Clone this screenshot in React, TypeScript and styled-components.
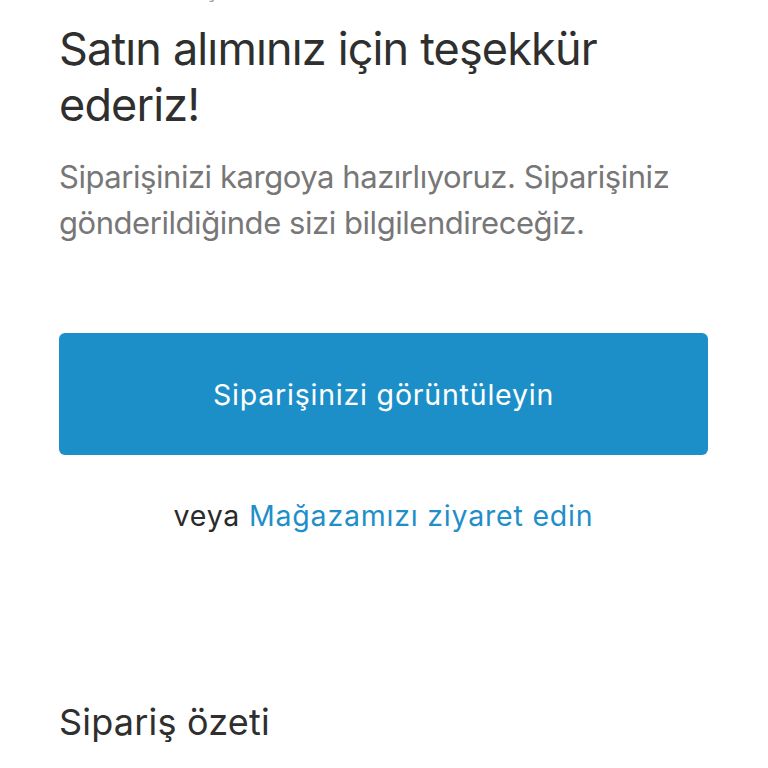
import React from "react";
import styled, { createGlobalStyle } from "styled-components";

const Global = createGlobalStyle`
  html, body { margin: 0; padding: 0; background: #ffffff; }
  body { font-family: Inter, "Noto Sans", "Liberation Sans", sans-serif; overflow: hidden; }
`;

const Page = styled.main`
  width: 768px;
  height: 768px;
  box-sizing: border-box;
  padding: 0 60px 0 59px;
  display: flex;
  flex-direction: column;
  overflow: hidden;
`;

const Greeting = styled.div`
  font-size: 24px;
  line-height: 30px;
  color: #a0a0a0;
  margin-top: -26px;
  white-space: nowrap;
`;

const Title = styled.h1`
  margin: 17px 0 0;
  font-size: 45px;
  line-height: 56px;
  font-weight: 400;
  color: #2f2f2f;
  letter-spacing: -0.85px;
`;

const Lead = styled.p`
  margin: 21px 0 0;
  font-size: 31px;
  line-height: 46px;
  color: #777777;
  letter-spacing: -0.45px;
`;

const PrimaryButton = styled.button`
  margin-top: 87px;
  height: 122px;
  width: 100%;
  border: none;
  border-radius: 6px;
  background: #1d8fc8;
  color: #ffffff;
  font-family: inherit;
  font-size: 28.5px;
  letter-spacing: 0.8px;
  display: flex;
  align-items: center;
  justify-content: center;
  padding: 0;
`;

const AltLine = styled.p`
  margin: 45px 0 0;
  font-size: 28.5px;
  line-height: 32px;
  letter-spacing: 0.8px;
  text-align: center;
  color: #2a2a2a;
`;

const Link = styled.a`
  color: #1f8fca;
  text-decoration: none;
`;

const SectionTitle = styled.h2`
  margin: 169px 0 0;
  font-size: 36px;
  line-height: 42px;
  font-weight: 400;
  letter-spacing: 0.2px;
  color: #2f2f2f;
`;

export default function App() {
  return (
    <>
      <Global />
      <Page>
        <Greeting>Merhaba Ateş</Greeting>
        <Title>Satın alımınız için teşekkür ederiz!</Title>
        <Lead>
          Siparişinizi kargoya hazırlıyoruz. Siparişiniz gönderildiğinde sizi
          bilgilendireceğiz.
        </Lead>
        <PrimaryButton>Siparişinizi görüntüleyin</PrimaryButton>
        <AltLine>
          veya <Link href="#">Mağazamızı ziyaret edin</Link>
        </AltLine>
        <SectionTitle>Sipariş özeti</SectionTitle>
      </Page>
    </>
  );
}
